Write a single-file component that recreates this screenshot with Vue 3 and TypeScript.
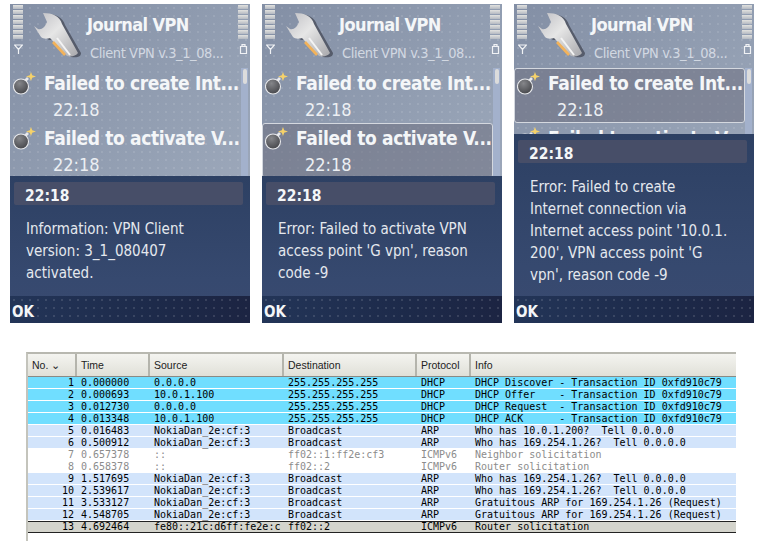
<script setup lang="ts">
interface Phone { selected: number; top: number; lines: string[] }
const phones: Phone[] = [
  { selected: -1, top: 172, lines: ['Information: VPN Client', 'version: 3_1_080407', 'activated.'] },
  { selected: 1, top: 172, lines: ['Error: Failed to activate VPN', "access point 'G vpn', reason", 'code -9'] },
  { selected: 0, top: 130, lines: ['Error: Failed to create', 'Internet connection via', "Internet access point '10.0.1.", "200', VPN access point 'G", "vpn', reason code -9"] },
]
const entries = ['Failed to create Int...', 'Failed to activate V...']
const bars = [0, 1, 2, 3, 4, 5, 6]
const dhcp = '255.255.255.255'
const nokia = 'NokiaDan_2e:cf:3'
const rows = [
  ['c', '1', '0.000000', '0.0.0.0', dhcp, 'DHCP', 'DHCP Discover - Transaction ID 0xfd910c79'],
  ['c', '2', '0.000693', '10.0.1.100', dhcp, 'DHCP', 'DHCP Offer    - Transaction ID 0xfd910c79'],
  ['c', '3', '0.012730', '0.0.0.0', dhcp, 'DHCP', 'DHCP Request  - Transaction ID 0xfd910c79'],
  ['c', '4', '0.013348', '10.0.1.100', dhcp, 'DHCP', 'DHCP ACK      - Transaction ID 0xfd910c79'],
  ['b', '5', '0.016483', nokia, 'Broadcast', 'ARP', 'Who has 10.0.1.200?  Tell 0.0.0.0'],
  ['b', '6', '0.500912', nokia, 'Broadcast', 'ARP', 'Who has 169.254.1.26?  Tell 0.0.0.0'],
  ['w', '7', '0.657378', '::', 'ff02::1:ff2e:cf3', 'ICMPv6', 'Neighbor solicitation'],
  ['w', '8', '0.658378', '::', 'ff02::2', 'ICMPv6', 'Router solicitation'],
  ['b', '9', '1.517695', nokia, 'Broadcast', 'ARP', 'Who has 169.254.1.26?  Tell 0.0.0.0'],
  ['b', '10', '2.539617', nokia, 'Broadcast', 'ARP', 'Who has 169.254.1.26?  Tell 0.0.0.0'],
  ['b', '11', '3.533127', nokia, 'Broadcast', 'ARP', 'Gratuitous ARP for 169.254.1.26 (Request)'],
  ['b', '12', '4.548705', nokia, 'Broadcast', 'ARP', 'Gratuitous ARP for 169.254.1.26 (Request)'],
  ['s', '13', '4.692464', 'fe80::21c:d6ff:fe2e:c', 'ff02::2', 'ICMPv6', 'Router solicitation'],
]
const heads = ['No. ⌄', 'Time', 'Source', 'Destination', 'Protocol', 'Info']
</script>

<template>
  <div class="page">
    <div class="phones">
      <div v-for="(p, pi) in phones" :key="pi" class="phone">
        <div class="head">
          <div class="indicator">
            <i v-for="b in bars" :key="b" class="bar" />
            <svg class="small" width="9" height="10" viewBox="0 0 9 10"><path d="M.5 1h8L4.500 5.500zM4.500 4v6" fill="none" stroke="#f0f2f5" stroke-width="1.200" /></svg>
          </div>
          <svg class="wrench" width="48" height="48" viewBox="0 0 48 48">
            <defs>
              <linearGradient :id="'wg' + pi" x1="0" y1="0" x2="1" y2="1">
                <stop offset="0" stop-color="#bdbdc2" />
                <stop offset=".45" stop-color="#e6e6e6" />
                <stop offset="1" stop-color="#a8a8ac" />
              </linearGradient>
            </defs>
            <path d="M13 2C22 2 30 5 32 13L48 41C48 45 44 46 38 45L20 28L16 28L12 25L17 17L16 11Z" fill="#565c6b" />
            <path d="M10 1C19 1 27 4 29 12L45 41C43 44 38 45 34 44L17 26C14 27 10 27 8 25L1 14L5 17C9 18 12 15 14 10Z" :fill="'url(#wg' + pi + ')'" />
            <path d="M20 30L32 43" stroke="#f2b25a" stroke-width="2.600" />
            <path d="M24 26L37 43" stroke="#f4f4f4" stroke-width="2" />
          </svg>
          <div class="titles">
            <div class="app">Journal VPN</div>
            <div class="sub">Client VPN v.3_1_08...</div>
          </div>
          <div class="indicator right">
            <i v-for="b in bars" :key="b" class="bar" />
            <svg class="small" width="9" height="10" viewBox="0 0 9 10"><path d="M1.500 2.500h6v7h-6zM3 2.500V.7h3v1.800" fill="none" stroke="#f0f2f5" stroke-width="1.200" /></svg>
          </div>
        </div>
        <div class="body">
          <div class="list">
            <div v-for="(e, i) in entries" :key="i" class="entry" :class="{ selected: p.selected === i }">
              <svg class="bomb" width="24" height="24" viewBox="0 0 24 24">
                <defs>
                  <radialGradient :id="'bg' + pi + i" cx=".4" cy=".3" r=".8">
                    <stop offset="0" stop-color="#85868a" />
                    <stop offset="1" stop-color="#3f4044" />
                  </radialGradient>
                </defs>
                <path d="M11 10l4-4" stroke="#e8e9ec" stroke-width="2.600" />
                <circle cx="8" cy="14.500" r="7.500" :fill="'url(#bg' + pi + i + ')'" stroke="#e8e9ec" stroke-width="1.100" />
                <path d="M18 0l1.200 3.300 3.800 1.200-3.800 1.200L18 9l-1.200-3.300L13 4.500l3.800-1.200z" fill="#f6d26a" />
              </svg>
              <div>
                <div class="etitle">{{ e }}</div>
                <div class="etime">22:18</div>
              </div>
            </div>
          </div>
          <div class="scroll"><i class="thumb" /></div>
        </div>
        <div class="popup" :style="{ top: p.top + 'px' }">
          <div class="pbody">
            <div class="ptime">22:18</div>
            <div class="msg">
              <div v-for="(l, i) in p.lines" :key="i">{{ l }}</div>
            </div>
          </div>
          <div class="soft">OK</div>
        </div>
      </div>
    </div>

    <div class="capture">
      <div class="thead">
        <div v-for="(h, i) in heads" :key="i" class="th" :class="'c' + i">{{ h }}</div>
      </div>
      <div v-for="r in rows" :key="r[1]" class="tr" :class="'row-' + r[0]">
        <div class="td c0 num">{{ r[1] }}</div>
        <div class="td c1">{{ r[2] }}</div>
        <div class="td c2">{{ r[3] }}</div>
        <div class="td c3">{{ r[4] }}</div>
        <div class="td c4">{{ r[5] }}</div>
        <div class="td c5">{{ r[6] }}</div>
      </div>
    </div>
  </div>
</template>

<style>
html, body { background: #fff; margin: 0; }
</style>

<style scoped>
.page {
  width: 763px;
  height: 541px;
  overflow: hidden;
  background: #fff;
  display: flex;
  flex-direction: column;
}
.phones {
  display: flex;
  gap: 12px;
  padding: 4px 0 0 10px;
}
.phone {
  position: relative;
  width: 240px;
  height: 319px;
  overflow: hidden;
  color: #f4f6f8;
  font-family: "DejaVu Sans Condensed", "DejaVu Sans", sans-serif;
  background-color: #929eb3;
  background-image:
    radial-gradient(circle, rgba(255, 255, 255, .1) 1px, transparent 1.200px),
    linear-gradient(135deg, #838fa5, #97a3b6 60%, #a5aec0);
  background-size: 8px 8px, 100% 100%;
}
.head {
  display: flex;
  height: 64px;
}
.indicator {
  width: 10px;
  flex: none;
  margin: 1px 0 0 3px;
  display: flex;
  flex-direction: column;
  align-items: center;
  gap: 1px;
}
.indicator.right {
  margin: 1px 2px 0 0;
}
.bar {
  width: 10px;
  height: 4px;
  background: linear-gradient(#e2e2df, #b4b9c2);
}
.small { margin-top: 4px; }
.wrench { margin: 8px 0 0 10px; flex: none; }
.titles {
  flex: 1;
  margin-left: 6px;
  white-space: nowrap;
}
.app {
  font-size: 18px;
  font-weight: 700;
  letter-spacing: -.6px;
  line-height: 22px;
  margin-top: 10px;
}
.sub {
  margin: 7px 0 0 3px;
  font-size: 14.500px;
  letter-spacing: -.4px;
  line-height: 20px;
  color: #d2d8e2;
}
.body {
  display: flex;
}
.list {
  flex: none;
  width: 231px;
}
.entry {
  display: flex;
  height: 55px;
  box-sizing: border-box;
  border: 1px solid transparent;
  border-radius: 3px;
  padding-left: 2px;
}
.entry.selected {
  border-color: #d4d8df;
  background: rgba(110, 112, 128, .55);
}
.bomb { margin-top: 3px; flex: none; width: 24px; }
.etitle {
  margin: 1px 0 0 7px;
  font-size: 19px;
  font-weight: 700;
  letter-spacing: -.35px;
  line-height: 26px;
  white-space: nowrap;
}
.etime {
  margin: 2px 0 0 16px;
  font-size: 18px;
  line-height: 24px;
  color: #eceff3;
}
.scroll {
  position: relative;
  width: 7px;
  height: 110px;
  background: #a3b1cc;
}
.thumb {
  position: absolute;
  left: 2px;
  top: 1px;
  width: 4px;
  height: 15px;
  background: #dcdcdc;
  border-radius: 2px;
}
.popup {
  position: absolute;
  left: 0;
  right: 0;
  bottom: 0;
  display: flex;
  flex-direction: column;
  background: linear-gradient(180deg, #2d4063, #36496f 70%, #3a4a70);
}
.pbody {
  flex: 1;
  padding: 6px 7px 0 4px;
}
.ptime {
  height: 23px;
  padding-left: 11px;
  background: #474e68;
  border-radius: 2px;
  font-size: 15.500px;
  font-weight: 700;
  line-height: 28px;
}
.msg {
  margin-top: 13px;
  padding-left: 12px;
  font-size: 15px;
  line-height: 22px;
  color: #e4e8ee;
  white-space: nowrap;
}
.soft {
  height: 27px;
  flex: none;
  padding-left: 2px;
  font-size: 15px;
  font-weight: 700;
  line-height: 32px;
  background-image:
    radial-gradient(circle, rgba(255, 255, 255, .12) 1px, transparent 1.200px),
    linear-gradient(90deg, #233558, #1d2a4a 60%, #1c2442);
  background-size: 8px 8px, 100% 100%;
}
.capture {
  margin: 29px 0 0 26px;
  width: 710px;
  flex: 1;
  box-sizing: border-box;
  border-top: 2px solid #b8b8b0;
  border-left: 2px solid #c4c4bc;
  font-family: "DejaVu Sans Mono", "Liberation Mono", monospace;
  font-size: 10px;
  color: #000;
}
.thead {
  display: flex;
  height: 23px;
  background: linear-gradient(#f4f4f0, #e0e0d8);
  border-bottom: 1px solid #8a8a84;
  box-sizing: border-box;
}
.th {
  box-sizing: border-box;
  border-right: 2px solid #b4b4ac;
  padding-left: 4px;
  font-family: "Liberation Sans", Arial, sans-serif;
  font-size: 10.500px;
  line-height: 23px;
  color: #222;
}
.th.c5 { border-right: 0; }
.c0 { width: 49px; flex: none; }
.c1 { width: 73px; flex: none; }
.c2 { width: 134px; flex: none; }
.c3 { width: 133px; flex: none; }
.c4 { width: 54px; flex: none; }
.c5 { flex: 1; }
.tr {
  display: flex;
  height: 12px;
  box-sizing: border-box;
  border-bottom: 1px solid #fff;
  line-height: 12px;
  white-space: pre;
}
.td {
  box-sizing: border-box;
  padding-left: 4px;
}
.td.num {
  text-align: right;
  padding: 0 3px 0 0;
}
.row-c { background: #70deff; }
.row-b { background: #d2e4fb; }
.row-w { background: #fff; color: #8c8c8c; }
.row-s {
  background: #d4d4cc;
  border-top: 1px solid #222;
  border-bottom: 1px solid #222;
  line-height: 10px;
}
</style>
